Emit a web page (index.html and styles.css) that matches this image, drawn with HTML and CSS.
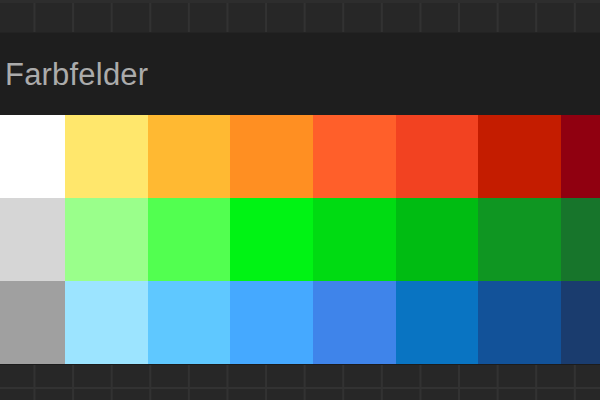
FILE: index.html
```html
<!DOCTYPE html>
<html lang="de">
<head>
<meta charset="utf-8">
<title>Farbfelder</title>
<link rel="stylesheet" href="styles.css">
</head>
<body>
<div class="page">
  <div class="strip strip-top"></div>
  <header class="header">
    <h1 class="title">Farbfelder</h1>
  </header>
  <section class="swatch-wrap">
    <div class="swatches">
      <div class="sw" style="background:#ffffff"></div>
      <div class="sw" style="background:#ffe76c"></div>
      <div class="sw" style="background:#ffb932"></div>
      <div class="sw" style="background:#ff8f22"></div>
      <div class="sw" style="background:#ff5f2a"></div>
      <div class="sw" style="background:#f24221"></div>
      <div class="sw" style="background:#c41c00"></div>
      <div class="sw" style="background:#900010"></div>

      <div class="sw" style="background:#d6d6d6"></div>
      <div class="sw" style="background:#9aff8b"></div>
      <div class="sw" style="background:#52ff50"></div>
      <div class="sw" style="background:#00f314"></div>
      <div class="sw" style="background:#00db12"></div>
      <div class="sw" style="background:#00bc12"></div>
      <div class="sw" style="background:#0f9622"></div>
      <div class="sw" style="background:#17752b"></div>

      <div class="sw" style="background:#a0a0a0"></div>
      <div class="sw" style="background:#9ce4ff"></div>
      <div class="sw" style="background:#5fc8ff"></div>
      <div class="sw" style="background:#45a9ff"></div>
      <div class="sw" style="background:#3f84ea"></div>
      <div class="sw" style="background:#0974c2"></div>
      <div class="sw" style="background:#125299"></div>
      <div class="sw" style="background:#1a3c6e"></div>
    </div>
  </section>
  <div class="strip strip-bottom"></div>
</div>
</body>
</html>
```
FILE: styles.css
```css
html, body {
  margin: 0;
  padding: 0;
  background: #1e1e1e;
}

.page {
  width: 600px;
  height: 400px;
  overflow: hidden;
  display: flex;
  flex-direction: column;
}

.strip {
  background-color: #272727;
  background-image: linear-gradient(to right, #323232 0, #323232 2px, transparent 2px);
  background-size: 38.6px 100%;
  background-position: 33.5px 0;
}

.strip-top {
  height: 33px;
  box-sizing: border-box;
  border-top: 3px solid #2d2d2d;
  border-bottom: 1px solid #232323;
}

.header {
  height: 82px;
  box-sizing: border-box;
  padding: 26px 0 0 5px;
}

.title {
  margin: 0;
  font-family: "Liberation Sans", Arial, sans-serif;
  font-weight: normal;
  font-size: 31px;
  line-height: 31px;
  color: #ababab;
  letter-spacing: 0.2px;
}

.swatch-wrap {
  height: 249px;
  overflow: hidden;
}

.swatches {
  display: grid;
  grid-template-columns: repeat(8, 82.7px);
  grid-auto-rows: 83px;
  margin-left: -17.7px;
  width: 662px;
}

.sw {
  width: 100%;
  height: 100%;
}

.strip-bottom {
  flex: 1;
  border-top: 1px solid #1c1c1c;
  background-image:
    linear-gradient(to bottom, transparent 22px, #323232 22px, #323232 24px, transparent 24px),
    linear-gradient(to right, #323232 0, #323232 2px, transparent 2px);
  background-size: 100% 100%, 38.6px 100%;
  background-position: 0 0, 33.5px 0;
  background-repeat: no-repeat, repeat;
}
```
